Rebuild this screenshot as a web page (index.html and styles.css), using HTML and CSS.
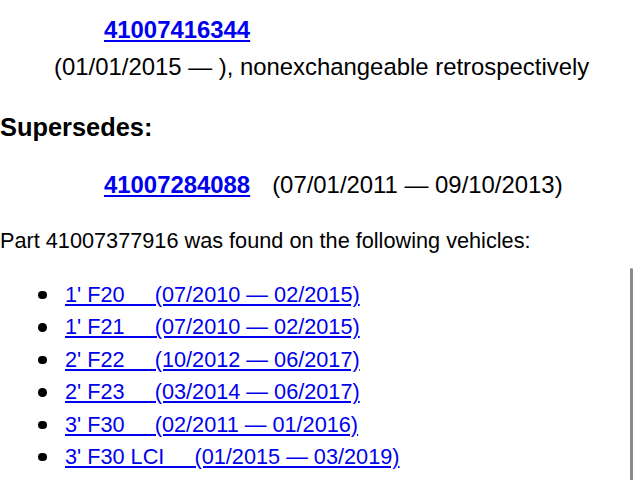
FILE: index.html
```html
<!DOCTYPE html>
<html lang="en">
<head>
<meta charset="utf-8">
<title>Part 41007377916</title>
<link rel="stylesheet" href="styles.css">
</head>
<body>
<div class="page">
  <div class="part-block">
    <div class="pn-row"><a class="pn" href="#">41007416344</a></div>
    <div class="dates">(01/01/2015 — ), nonexchangeable retrospectively</div>
  </div>
  <h3 class="heading">Supersedes:</h3>
  <div class="part-block superseded">
    <div class="pn-row"><a class="pn" href="#">41007284088</a><span class="range">(07/01/2011 — 09/10/2013)</span></div>
  </div>
  <p class="found">Part 41007377916 was found on the following vehicles:</p>
  <ul class="vehicles">
    <li><a href="#">1' F20&nbsp;&nbsp;&nbsp;&nbsp;&nbsp;(07/2010 — 02/2015)</a></li>
    <li><a href="#">1' F21&nbsp;&nbsp;&nbsp;&nbsp;&nbsp;(07/2010 — 02/2015)</a></li>
    <li><a href="#">2' F22&nbsp;&nbsp;&nbsp;&nbsp;&nbsp;(10/2012 — 06/2017)</a></li>
    <li><a href="#">2' F23&nbsp;&nbsp;&nbsp;&nbsp;&nbsp;(03/2014 — 06/2017)</a></li>
    <li><a href="#">3' F30&nbsp;&nbsp;&nbsp;&nbsp;&nbsp;(02/2011 — 01/2016)</a></li>
    <li><a href="#">3' F30 LCI&nbsp;&nbsp;&nbsp;&nbsp;&nbsp;(01/2015 — 03/2019)</a></li>
  </ul>
</div>
<div class="scroll-indicator"></div>
</body>
</html>
```
FILE: styles.css
```css
html, body {
  margin: 0;
  padding: 0;
  background: #ffffff;
  overflow: hidden;
}

body {
  font-family: "Liberation Sans", Arial, sans-serif;
  font-size: 21.7px;
  line-height: 32px;
  color: #000000;
}

.page {
  padding-top: 14px;
}

a {
  color: #0000ee;
  text-decoration: underline;
}

.part-block {
  font-size: 23.9px;
}

.pn-row {
  padding-left: 104px;
  height: 32px;
  white-space: nowrap;
}

.pn {
  font-weight: bold;
}

.dates {
  margin-top: 5px;
  padding-left: 54px;
}

.heading {
  margin: 28px 0 0 0;
  font-size: 25.4px;
  line-height: 32px;
  font-weight: bold;
}

.superseded {
  margin-top: 26px;
}

.range {
  margin-left: 22px;
}

.found {
  margin: 24px 0 0 0;
}

.vehicles {
  margin: 22px 0 0 0;
  padding-left: 38px;
  list-style: none;
  line-height: 32.4px;
}

.vehicles li {
  display: flex;
  align-items: center;
}

.vehicles li::before {
  content: "";
  width: 8.5px;
  height: 8.5px;
  border-radius: 50%;
  background: #000000;
  margin-right: 18.5px;
  flex: none;
}

.scroll-indicator {
  position: fixed;
  left: 630px;
  top: 268px;
  width: 3px;
  bottom: -10px;
  background: #8a8a8a;
  border-radius: 2px;
}
```
